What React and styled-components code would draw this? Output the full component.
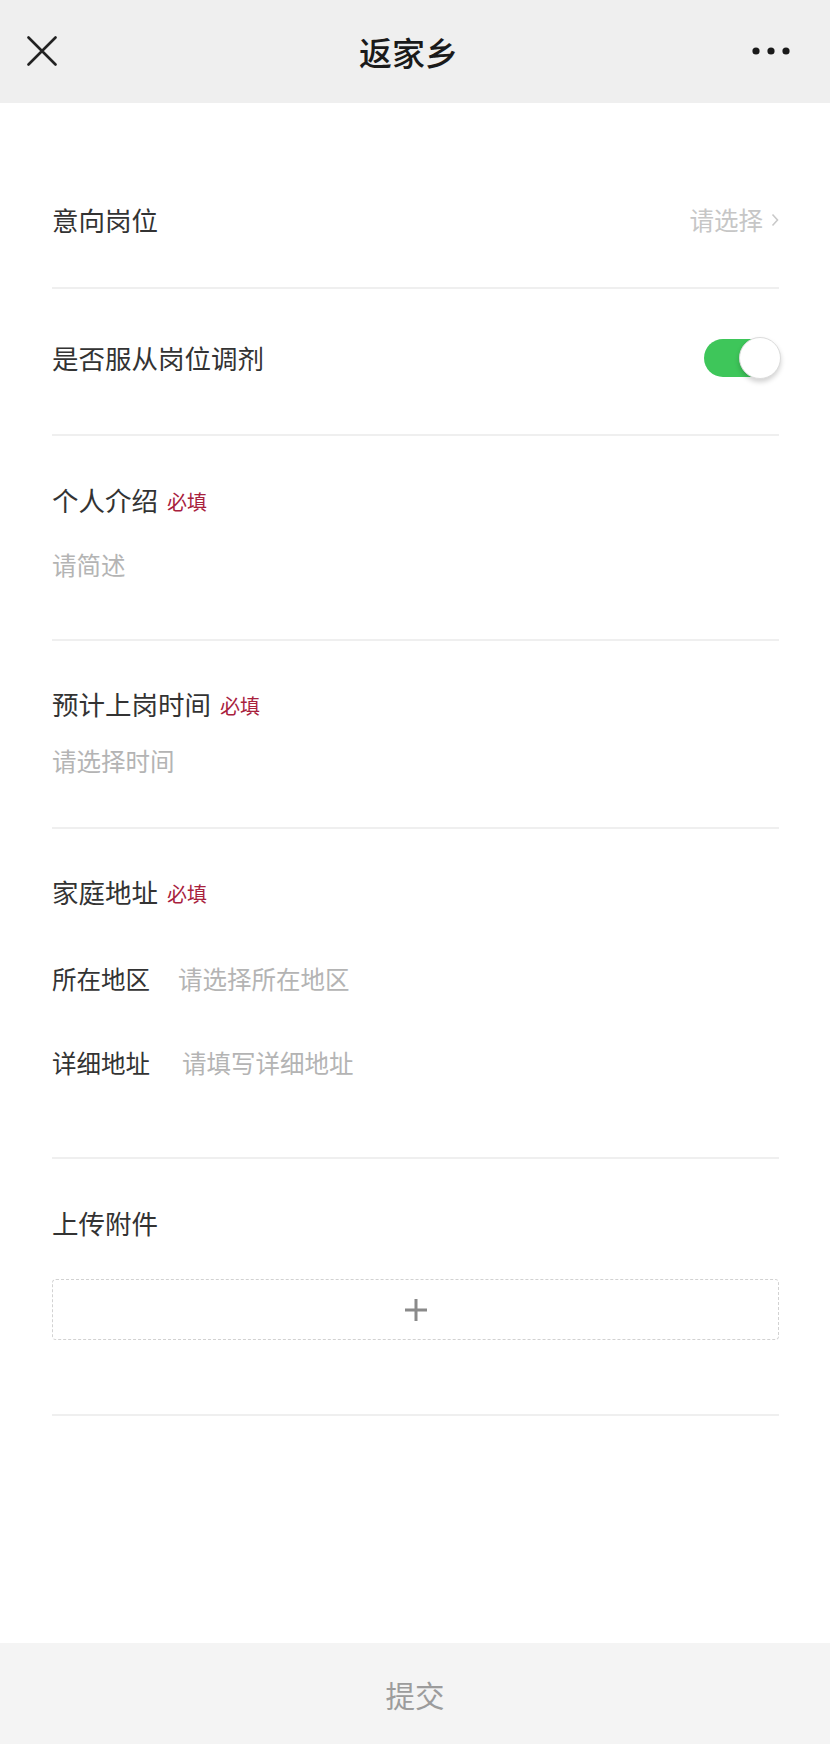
import React from 'react';
import styled, { createGlobalStyle } from 'styled-components';

const GlobalStyle = createGlobalStyle`
  html, body {
    margin: 0;
    padding: 0;
    background: #fff;
  }
  body {
    font-family: "Noto Sans CJK SC", "Noto Sans", sans-serif;
    color: #333;
  }
`;

const App = () => {
  return (
    <>
      <GlobalStyle />
      <Page>
        <Header>
          <HeaderLeft>
            <svg width="30" height="30" viewBox="0 0 30 30">
              <path d="M1.5 1.5 L28.5 28.5 M28.5 1.5 L1.5 28.5" stroke="#222" strokeWidth="2.6" strokeLinecap="round" />
            </svg>
          </HeaderLeft>
          <Title>返家乡</Title>
          <HeaderRight>
            <svg width="38" height="8" viewBox="0 0 38 8">
              <circle cx="4" cy="4" r="3.6" fill="#1a1a1a" />
              <circle cx="19" cy="4" r="3.6" fill="#1a1a1a" />
              <circle cx="34" cy="4" r="3.6" fill="#1a1a1a" />
            </svg>
          </HeaderRight>
        </Header>

        <Form>
          <Section pt={99} pb={49}>
            <Row>
              <Label>意向岗位</Label>
              <Picker>
                请选择
                <svg width="8" height="14" viewBox="0 0 8 14">
                  <path d="M1.5 1.5 L6.5 7 L1.5 12.5" fill="none" stroke="#c9c9c9" strokeWidth="1.6" />
                </svg>
              </Picker>
            </Row>
          </Section>

          <Section pt={50} pb={57}>
            <Row>
              <Label>是否服从岗位调剂</Label>
              <Switch>
                <Knob />
              </Switch>
            </Row>
          </Section>

          <Section pt={46} pb={57}>
            <Heading>
              <Label>个人介绍</Label>
              <Required>必填</Required>
            </Heading>
            <Placeholder gap={30}>请简述</Placeholder>
          </Section>

          <Section pt={45} pb={49}>
            <Heading>
              <Label>预计上岗时间</Label>
              <Required>必填</Required>
            </Heading>
            <Placeholder gap={22}>请选择时间</Placeholder>
          </Section>

          <Section pt={45} pb={76}>
            <Heading>
              <Label>家庭地址</Label>
              <Required>必填</Required>
            </Heading>
            <Field gap={51} spacing={28}>
              <SubLabel>所在地区</SubLabel>
              <Hint>请选择所在地区</Hint>
            </Field>
            <Field gap={48} spacing={32}>
              <SubLabel>详细地址</SubLabel>
              <Hint>请填写详细地址</Hint>
            </Field>
          </Section>

          <Section pt={46} pb={74}>
            <Label>上传附件</Label>
            <Upload>
              <svg width="24" height="24" viewBox="0 0 24 24">
                <path d="M12 1 V23 M1 12 H23" stroke="#8a8a8a" strokeWidth="3" />
              </svg>
            </Upload>
          </Section>
        </Form>

        <Footer>提交</Footer>
      </Page>
    </>
  );
};

export default App;

const Page = styled.div`
  min-height: 100vh;
  display: flex;
  flex-direction: column;
  background: #fff;
`;

const Header = styled.div`
  height: 103px;
  background: #efefef;
  display: grid;
  grid-template-columns: 1fr auto 1fr;
  align-items: center;
  padding: 0 40px 0 27px;
`;

const HeaderLeft = styled.div`
  display: flex;
  align-items: center;
  margin-top: -2px;
`;

const HeaderRight = styled.div`
  display: flex;
  justify-content: flex-end;
  margin-top: -2px;
`;

const Title = styled.div`
  font-size: 33px;
  font-weight: 500;
  color: #1a1a1a;
  line-height: 40px;
`;

const Form = styled.div`
  padding: 0 51px 0 52px;
`;

const Section = styled.div`
  padding-top: ${p => p.pt}px;
  padding-bottom: ${p => p.pb}px;
  border-bottom: 2px solid #efefef;
`;

const Row = styled.div`
  display: flex;
  align-items: center;
  justify-content: space-between;
`;

const Heading = styled.div`
  display: flex;
  align-items: center;
  column-gap: 9px;
  height: 36px;
`;

const Label = styled.div`
  font-size: 26.5px;
  line-height: 36px;
  color: #333;
`;

const Required = styled.span`
  font-size: 20px;
  line-height: 24px;
  padding-top: 3px;
  color: #a8213d;
`;

const Picker = styled.div`
  display: flex;
  align-items: center;
  column-gap: 8px;
  font-size: 24.5px;
  line-height: 36px;
  color: #c6c6c6;
`;

const Placeholder = styled.div`
  margin-top: ${p => p.gap}px;
  font-size: 24.5px;
  line-height: 34px;
  color: #b4b4b4;
`;

const Field = styled.div`
  margin-top: ${p => p.gap}px;
  display: flex;
  align-items: center;
  column-gap: ${p => p.spacing}px;
  height: 36px;
`;

const SubLabel = styled.span`
  font-size: 24.5px;
  line-height: 36px;
  color: #333;
`;

const Hint = styled.span`
  font-size: 24.5px;
  line-height: 36px;
  color: #b4b4b4;
`;

const Switch = styled.div`
  width: 76px;
  height: 38px;
  border-radius: 19px;
  background: #3ec65a;
  display: flex;
  align-items: center;
  justify-content: flex-end;
  margin-right: -1px;
`;

const Knob = styled.div`
  flex: none;
  width: 42px;
  height: 42px;
  border-radius: 50%;
  background: #fff;
  box-sizing: border-box;
  border: 1px solid #dcdcdc;
  box-shadow: 0 3px 5px rgba(0, 0, 0, 0.18);
  margin-right: -1px;
`;

const Upload = styled.div`
  margin-top: 38px;
  height: 61px;
  box-sizing: border-box;
  border: 1.5px dashed #d2d2d2;
  border-radius: 4px;
  display: flex;
  align-items: center;
  justify-content: center;
`;

const Footer = styled.div`
  margin-top: auto;
  height: 101px;
  background: #f4f4f4;
  display: flex;
  align-items: center;
  justify-content: center;
  font-size: 29.5px;
  color: #9c9c9c;
`;
